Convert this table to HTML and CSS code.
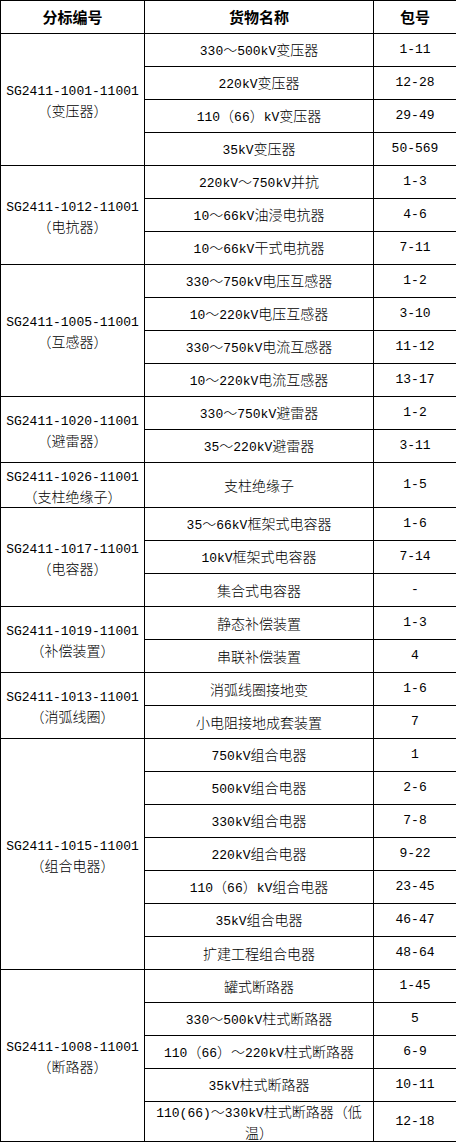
FILE: index.html
```html
<!DOCTYPE html>
<html lang="zh">
<head>
<meta charset="utf-8">
<title>分标编号</title>
<link rel="stylesheet" href="styles.css">
</head>
<body>
<table class="goods">
<colgroup><col class="c1"><col class="c2"><col class="c3"></colgroup>
<thead>
<tr class="head"><th>分标编号</th><th>货物名称</th><th>包号</th></tr>
</thead>
<tbody>
<tr><td rowspan="4" class="code"><span class="l">SG2411-1001-11001</span><br>（变压器）</td><td><span class="l">330</span>～<span class="l">500kV</span>变压器</td><td class="num">1-11</td></tr>
<tr><td><span class="l">220kV</span>变压器</td><td class="num">12-28</td></tr>
<tr><td><span class="l">110</span>（<span class="l">66</span>）<span class="l">kV</span>变压器</td><td class="num">29-49</td></tr>
<tr><td><span class="l">35kV</span>变压器</td><td class="num">50-569</td></tr>

<tr><td rowspan="3" class="code"><span class="l">SG2411-1012-11001</span><br>（电抗器）</td><td><span class="l">220kV</span>～<span class="l">750kV</span>并抗</td><td class="num">1-3</td></tr>
<tr><td><span class="l">10</span>～<span class="l">66kV</span>油浸电抗器</td><td class="num">4-6</td></tr>
<tr><td><span class="l">10</span>～<span class="l">66kV</span>干式电抗器</td><td class="num">7-11</td></tr>

<tr><td rowspan="4" class="code"><span class="l">SG2411-1005-11001</span><br>（互感器）</td><td><span class="l">330</span>～<span class="l">750kV</span>电压互感器</td><td class="num">1-2</td></tr>
<tr><td><span class="l">10</span>～<span class="l">220kV</span>电压互感器</td><td class="num">3-10</td></tr>
<tr><td><span class="l">330</span>～<span class="l">750kV</span>电流互感器</td><td class="num">11-12</td></tr>
<tr><td><span class="l">10</span>～<span class="l">220kV</span>电流互感器</td><td class="num">13-17</td></tr>

<tr><td rowspan="2" class="code"><span class="l">SG2411-1020-11001</span><br>（避雷器）</td><td><span class="l">330</span>～<span class="l">750kV</span>避雷器</td><td class="num">1-2</td></tr>
<tr><td><span class="l">35</span>～<span class="l">220kV</span>避雷器</td><td class="num">3-11</td></tr>

<tr class="tall"><td class="code"><span class="l">SG2411-1026-11001</span><br>（支柱绝缘子）</td><td>支柱绝缘子</td><td class="num">1-5</td></tr>

<tr><td rowspan="3" class="code"><span class="l">SG2411-1017-11001</span><br>（电容器）</td><td><span class="l">35</span>～<span class="l">66kV</span>框架式电容器</td><td class="num">1-6</td></tr>
<tr><td><span class="l">10kV</span>框架式电容器</td><td class="num">7-14</td></tr>
<tr><td>集合式电容器</td><td class="num">-</td></tr>

<tr><td rowspan="2" class="code"><span class="l">SG2411-1019-11001</span><br>（补偿装置）</td><td>静态补偿装置</td><td class="num">1-3</td></tr>
<tr><td>串联补偿装置</td><td class="num">4</td></tr>

<tr><td rowspan="2" class="code"><span class="l">SG2411-1013-11001</span><br>（消弧线圈）</td><td>消弧线圈接地变</td><td class="num">1-6</td></tr>
<tr><td>小电阻接地成套装置</td><td class="num">7</td></tr>

<tr><td rowspan="7" class="code"><span class="l">SG2411-1015-11001</span><br>（组合电器）</td><td><span class="l">750kV</span>组合电器</td><td class="num">1</td></tr>
<tr><td><span class="l">500kV</span>组合电器</td><td class="num">2-6</td></tr>
<tr><td><span class="l">330kV</span>组合电器</td><td class="num">7-8</td></tr>
<tr><td><span class="l">220kV</span>组合电器</td><td class="num">9-22</td></tr>
<tr><td><span class="l">110</span>（<span class="l">66</span>）<span class="l">kV</span>组合电器</td><td class="num">23-45</td></tr>
<tr><td><span class="l">35kV</span>组合电器</td><td class="num">46-47</td></tr>
<tr><td>扩建工程组合电器</td><td class="num">48-64</td></tr>

<tr><td rowspan="5" class="code"><span class="l">SG2411-1008-11001</span><br>（断路器）</td><td>罐式断路器</td><td class="num">1-45</td></tr>
<tr><td><span class="l">330</span>～<span class="l">500kV</span>柱式断路器</td><td class="num">5</td></tr>
<tr><td><span class="l">110</span>（<span class="l">66</span>）～<span class="l">220kV</span>柱式断路器</td><td class="num">6-9</td></tr>
<tr><td><span class="l">35kV</span>柱式断路器</td><td class="num">10-11</td></tr>
<tr class="last"><td><span class="l">110(66)</span>～<span class="l">330kV</span>柱式断路器（低<br>温）</td><td class="num">12-18</td></tr>
</tbody>
</table>
</body>
</html>
```
FILE: styles.css
```css
html, body {
  margin: 0;
  padding: 0;
  background: #ffffff;
}

.goods {
  border-collapse: collapse;
  table-layout: fixed;
  width: 456px;
  font-family: "Noto Sans CJK SC", "Noto Sans", sans-serif;
  font-size: 14px;
  font-weight: 300;
  line-height: 18px;
  color: #000000;
}

.c1 { width: 144px; }
.c2 { width: 229px; }
.c3 { width: 83px; }

.goods th,
.goods td {
  border: 1px solid #000000;
  padding: 0;
  text-align: center;
  vertical-align: middle;
  white-space: nowrap;
}

.goods th {
  font-size: 15px;
  font-weight: 700;
}

.goods .l,
.goods .num {
  font-family: "Liberation Mono", "DejaVu Sans Mono", monospace;
  font-size: 13px;
  font-weight: 400;
}

.goods tr {
  height: 33px;
}

.goods tr.tall {
  height: 45px;
}

.goods tr.last {
  height: 40px;
}
```
